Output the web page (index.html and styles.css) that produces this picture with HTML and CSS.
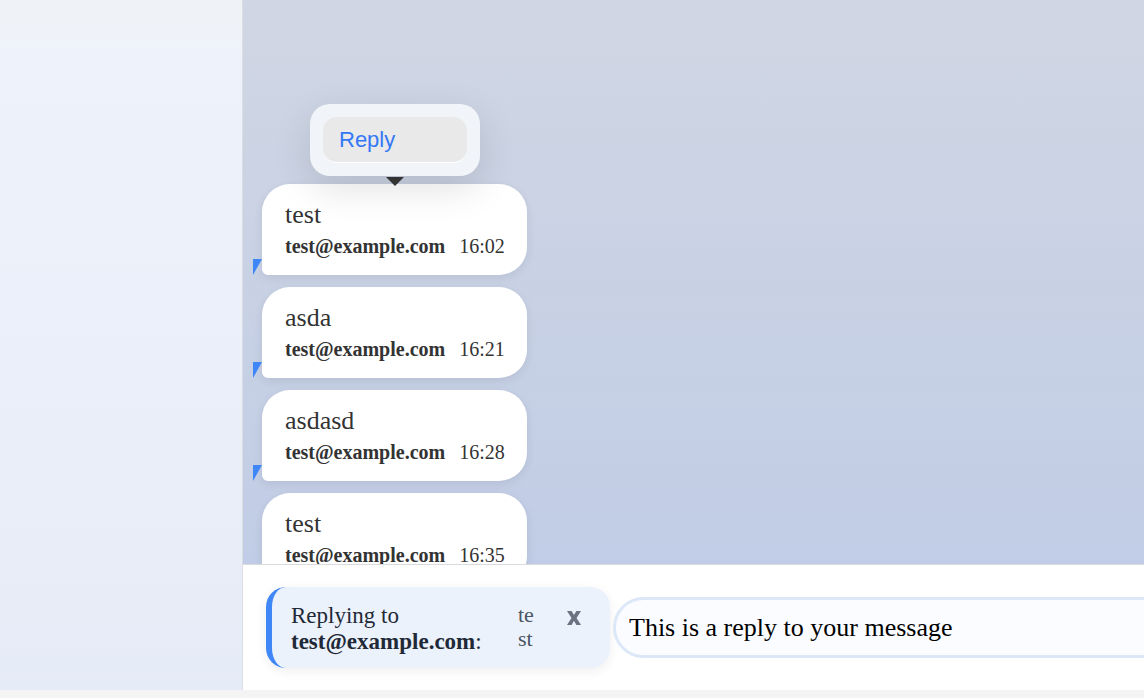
FILE: index.html
```
<!DOCTYPE html>
<html lang="en">
<head>
<meta charset="utf-8">
<meta name="viewport" content="width=device-width, initial-scale=1">
<title>Chat</title>
<link rel="stylesheet" href="styles.css">
</head>
<body>
<div class="app">
  <aside class="sidebar"></aside>
  <main class="chat">
    <section class="messages">
      <article class="bubble">
        <div class="menu"><button class="menu-item" type="button">Reply</button></div>
        <p class="text">test</p>
        <div class="meta"><strong>test@example.com</strong><time>16:02</time></div>
      </article>
      <article class="bubble">
        <p class="text">asda</p>
        <div class="meta"><strong>test@example.com</strong><time>16:21</time></div>
      </article>
      <article class="bubble">
        <p class="text">asdasd</p>
        <div class="meta"><strong>test@example.com</strong><time>16:28</time></div>
      </article>
      <article class="bubble">
        <p class="text">test</p>
        <div class="meta"><strong>test@example.com</strong><time>16:35</time></div>
      </article>
    </section>
    <form class="composer">
      <div class="reply">
        <div class="reply-to">Replying to <strong>test@example.com</strong>:</div>
        <div class="reply-text">test</div>
        <button class="close" type="button" aria-label="Cancel reply"><svg class="close-icon" viewBox="0 0 14 14" aria-hidden="true"><path d="M0 0H4.6L7 4L9.4 0H14L9.5 7L14 14H9.4L7 9.8L4.6 14H0L4.5 7Z"/></svg></button>
      </div>
      <input class="message-input" type="text" aria-label="Message" value="This is a reply to your message">
    </form>
  </main>
</div>
</body>
</html>
```

FILE: styles.css
```
* { box-sizing: border-box; }

body {
  margin: 0;
  background: #f4f4f4;
  font-family: "Liberation Serif", "Times New Roman", serif;
  overflow: hidden;
}

.app {
  display: grid;
  grid-template-columns: 243px 1fr;
  height: calc(100vh - 8px);
}

.sidebar {
  border-right: 1px solid #dcdde0;
  background: linear-gradient(#eff3f6 0, #eff3f8 28px, #eef2fb 60px, #e6ecf7 100%);
}

.chat {
  display: flex;
  flex-direction: column;
  min-width: 0;
  min-height: 0;
  background: #fff;
}

.messages {
  flex: 1;
  display: flex;
  flex-direction: column;
  align-items: flex-start;
  gap: 12px;
  min-height: 0;
  padding: 184px 19px 0;
  overflow: hidden;
  background: linear-gradient(#d0d6e3, #c1cde6);
}

.bubble {
  position: relative;
  flex: none;
  padding: 15px 22px 13px 23px;
  border-radius: 28px 28px 28px 6px;
  background: #fff;
  color: #333;
  box-shadow: 0 3px 10px rgba(0, 0, 0, 0.08);
}

.bubble::after {
  content: "";
  position: absolute;
  left: -9px;
  bottom: 0;
  width: 9px;
  height: 16px;
  background: #3f86f7;
  clip-path: polygon(0 0, 100% 0, 0 100%);
}

.text {
  margin: 0;
  font-size: 26px;
  line-height: 32px;
}

.meta {
  display: flex;
  gap: 14px;
  font-size: 20px;
  line-height: 31px;
}

.menu {
  position: absolute;
  z-index: 1;
  left: 48px;
  bottom: calc(100% + 8px);
  width: 170px;
  padding: 13px;
  border-radius: 20px;
  background: #f1f4f9;
  box-shadow: 0 12px 38px rgba(0, 0, 0, 0.12);
}

.menu::after {
  content: "";
  position: absolute;
  top: calc(100% + 1px);
  left: calc(50% - 9px);
  border: 9px solid transparent;
  border-top-color: #333;
  border-bottom: 0;
}

.menu-item {
  display: block;
  width: 100%;
  height: 46px;
  padding: 0 16px;
  border: 0;
  border-bottom: 1px solid #fff;
  border-radius: 14px;
  background: #e9e9e9;
  color: #3478f6;
  font: 22px "Liberation Sans", Arial, sans-serif;
  text-align: left;
}

.composer {
  flex: none;
  display: flex;
  align-items: center;
  gap: 3px;
  padding: 22px 0 22px 23px;
  border-top: 1px solid #d9dbdf;
}

.reply {
  flex: none;
  display: flex;
  align-items: flex-start;
  width: 344px;
  padding: 16px 29px 13px 19px;
  border-left: 6px solid #3f86f7;
  border-radius: 20px;
  background: #ebf2fc;
  color: #1f2937;
  box-shadow: 0 3px 12px rgba(0, 0, 0, 0.07);
}

.reply-to {
  flex: 1;
  font-size: 23px;
  line-height: 26px;
}

.reply-text {
  width: 18px;
  color: #4b5563;
  font-size: 22px;
  line-height: 24px;
  overflow-wrap: anywhere;
}

.close {
  margin: 8px 0 0 31px;
  padding: 0;
  border: 0;
  background: none;
}

.close-icon {
  display: block;
  width: 14px;
  height: 14px;
  fill: #6b7280;
}

.message-input {
  flex: 1;
  min-width: 0;
  height: 61px;
  margin-right: -32px;
  padding: 0 13px;
  border: 3px solid #dce8f8;
  border-radius: 31px;
  background: #fbfcff;
  color: #000;
  font: 26px "Liberation Serif", "Times New Roman", serif;
}
```
